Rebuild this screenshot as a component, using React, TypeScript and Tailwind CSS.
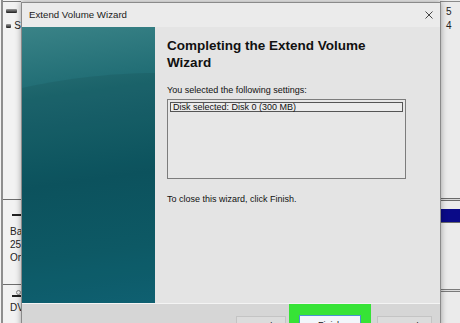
import React from "react";

const ui = { fontFamily: '"Liberation Sans", Arial, sans-serif' };

function DiskIcon() {
  return <div className="h-[4px] w-[11px] bg-[linear-gradient(180deg,#9a9a9a,#1c1c1c)] rounded-[1px]" />;
}

function LeftStrip() {
  return (
    <div className="w-[21px] h-full shrink-0 pl-[1px] bg-[#f2f2f2]" style={ui}>
      <div className="h-full border-l-2 border-[#8e8e8e] flex flex-col text-[10px] leading-[12px] text-[#222]">
        <div className="h-[2px] border-b border-[#7a7a7a]" />
        <div className="mt-[7px] ml-[3px]">
          <DiskIcon />
        </div>
        <div className="mt-[8px] flex items-center gap-[3px] ml-[3px]">
          <DiskIcon />
          <span className="text-[10px] leading-[10px]">S</span>
        </div>
        <div className="h-[168px]" />
        <div className="h-px bg-[#6d6d6d]" />
        <div className="h-[16px] flex items-end pl-[9px]">
          <div className="h-[2px] w-[10px] bg-[#222]" />
        </div>
        <div className="mt-[10px] pl-[7px]">Ba</div>
        <div className="mt-[1px] pl-[7px]">25.</div>
        <div className="mt-[1px] pl-[7px]">On</div>
        <div className="h-[20px]" />
        <div className="h-px bg-[#6d6d6d]" />
        <div className="mt-[5px] pl-[13px]">
          <div className="h-[5px] w-[5px] rounded-full border border-[#888]" />
        </div>
        <div className="h-[2px] w-[10px] ml-[9px] bg-[#222]" />
        <div className="mt-[5px] pl-[7px]">DV</div>
      </div>
    </div>
  );
}

function RightStrip() {
  return (
    <div className="w-[20px] h-full shrink-0 bg-[#ebebeb] flex flex-col text-[10px] leading-[14px] text-[#222]" style={ui}>
      <div className="h-[2px] border-b border-[#8a8a8a]" />
      <div className="mt-[3px] pl-[6px]">5</div>
      <div className="pl-[6px]">4</div>
      <div className="h-[165px]" />
      <div className="h-[3px] border-y border-[#6a6a6a] bg-[#d8d8d8]" />
      <div className="h-[8px]" />
      <div className="h-[13px] bg-[#0a0a88]" />
      <div className="h-px bg-[#6a6a6a]" />
      <div className="h-[66px]" />
      <div className="h-[3px] border-y border-[#7a7a7a] bg-[#dcdcdc]" />
    </div>
  );
}

function WizardArt() {
  return (
    <div className="relative w-[133px] h-full shrink-0 overflow-hidden bg-[linear-gradient(172deg,#3a8387_0%,#1d6a72_25%,#0d5965_55%,#0e606d_80%,#11687a_100%)]">
      <svg className="absolute inset-0" width="133" height="276" viewBox="0 0 133 276">
        <path d="M0 61 C 35 53, 85 46, 133 46 L133 276 L0 276 Z" fill="#000" fillOpacity="0.07" />
      </svg>
    </div>
  );
}

function Wizard() {
  return (
    <div
      className="absolute left-[21px] top-[2px] w-[420px] h-[340px] bg-[#e6e6e6] border border-[#8a8a8a] shadow-[0_0_6px_rgba(0,0,0,0.35)] flex flex-col"
      style={ui}
    >
      <div className="h-[24px] shrink-0 flex items-center justify-between pl-[7px] pr-[7px] bg-[#ebebeb]">
        <span className="text-[9.7px] text-[#1a1a1a]">Extend Volume Wizard</span>
        <svg width="8" height="8" viewBox="0 0 8 8">
          <path d="M0.5 0.5 L7.5 7.5 M7.5 0.5 L0.5 7.5" stroke="#333" strokeWidth="0.9" />
        </svg>
      </div>
      <div className="h-[276px] shrink-0 flex">
        <WizardArt />
        <div className="flex-1 pl-[12px] pt-[10px] bg-[#e4e4e4] text-[#111]">
          <h1 className="text-[13.5px] leading-[17px] font-bold w-[230px]">Completing the Extend Volume Wizard</h1>
          <p className="mt-[13px] text-[9px] leading-[12px]">You selected the following settings:</p>
          <div className="mt-[3px] w-[239px] h-[80px] border border-[#7c7c7c] bg-[#e7e7e7] p-[2px]">
            <div className="h-[10px] border border-[#555] bg-[#ebebeb] text-[9px] leading-[8px] pl-[2px] text-[#111]">
              Disk selected: Disk 0 (300 MB)
            </div>
          </div>
          <p className="mt-[14px] text-[9px] leading-[12px]">To close this wizard, click Finish.</p>
        </div>
      </div>
      <div className="flex-1 border-t border-[#f4f4f4] bg-[#d6d6d6] flex justify-end pr-[8px] text-[9px] text-[#111]">
        <div className="mt-[12px] w-[50px] h-[18px] bg-[#dcdcdc] border border-[#c4c4c4] flex justify-center pt-[3px]">
          &lt; Back
        </div>
        <div className="ml-[3px] w-[82px] h-full bg-[#36e336] flex justify-center pt-[11px]">
          <div className="w-[62px] h-[18px] bg-[#f2f6fa] border border-[#4a92d0] flex justify-center pt-[3px]">Finish</div>
        </div>
        <div className="ml-[6px] mt-[12px] w-[55px] h-[18px] bg-[#dcdcdc] border border-[#c4c4c4] flex justify-center pt-[3px]">
          Cancel
        </div>
      </div>
    </div>
  );
}

export default function App() {
  return (
    <div className="relative w-[460px] h-[323px] overflow-hidden bg-[#ececec] flex justify-between">
      <LeftStrip />
      <RightStrip />
      <Wizard />
    </div>
  );
}
